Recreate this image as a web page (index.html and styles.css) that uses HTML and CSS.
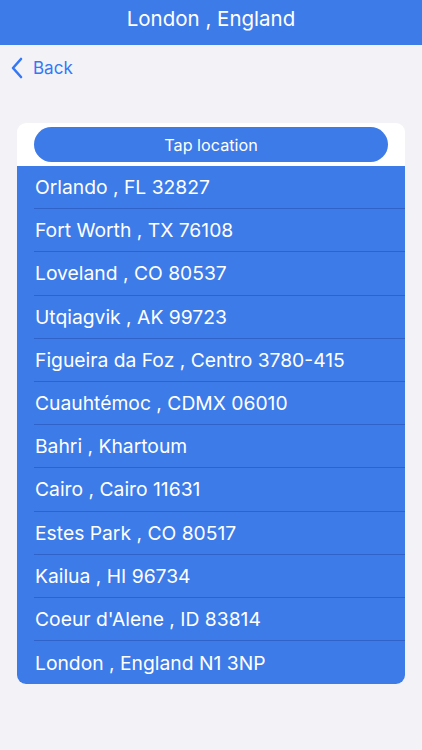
FILE: index.html
```html
<!DOCTYPE html>
<html lang="en">

<head>
    <meta charset="UTF-8">
    <meta name="viewport" content="width=device-width, initial-scale=1.0">
    <title>locations</title>
    <link rel="stylesheet" href="styles.css">
</head>

<body>
    <div id="header">London , England</div>
    <div id="nav">
        <a href="#" id="back">
            <svg width="14" height="22" viewBox="0 0 14 22">
                <path d="M11 2 L3 11 L11 20" fill="none" stroke="#3478f6" stroke-width="2.6" stroke-linecap="round" stroke-linejoin="round" />
            </svg>
            <span>Back</span>
        </a>
    </div>
    <div id="card">
        <div id="card-top">
            <button id="tap">Tap location</button>
        </div>
        <ul id="list">
            <li>Orlando , FL 32827</li>
            <li>Fort Worth , TX 76108</li>
            <li>Loveland , CO 80537</li>
            <li>Utqiagvik , AK 99723</li>
            <li>Figueira da Foz , Centro 3780-415</li>
            <li>Cuauhtémoc , CDMX 06010</li>
            <li>Bahri , Khartoum</li>
            <li>Cairo , Cairo 11631</li>
            <li>Estes Park , CO 80517</li>
            <li>Kailua , HI 96734</li>
            <li>Coeur d'Alene , ID 83814</li>
            <li>London , England N1 3NP</li>
        </ul>
    </div>
</body>

</html>
```

FILE: styles.css
```css
body {
    margin: 0;
    background: #f2f2f7;
    font-family: Inter, "Noto Sans", sans-serif;
}

#header {
    height: 45px;
    background: #3d7be8;
    color: white;
    font-size: 20.5px;
    display: flex;
    justify-content: center;
    align-items: center;
    padding-bottom: 8px;
    box-sizing: border-box;
}

#nav {
    height: 45px;
    display: flex;
    align-items: center;
    padding-left: 10px;
}

#back {
    display: flex;
    align-items: center;
    gap: 9px;
    text-decoration: none;
    color: #3478f6;
    font-size: 17px;
}

#card {
    margin: 33px 17px 0 17px;
    background: white;
    border-radius: 9px;
    overflow: hidden;
}

#card-top {
    padding: 4px 17px 4px 17px;
}

#tap {
    display: block;
    width: 100%;
    height: 35px;
    border: none;
    border-radius: 18px;
    background: #3d7be8;
    color: white;
    font-family: inherit;
    font-size: 16.2px;
}

#list {
    list-style: none;
    margin: 0;
    padding: 0;
    background: #3d7be8;
}

#list li {
    height: 43.2px;
    margin-left: 17px;
    display: flex;
    align-items: center;
    padding-left: 1px;
    color: white;
    font-size: 19.3px;
    border-bottom: 1px solid #2f63c9;
    box-sizing: border-box;
}

#list li:last-child {
    border-bottom: none;
}
```
